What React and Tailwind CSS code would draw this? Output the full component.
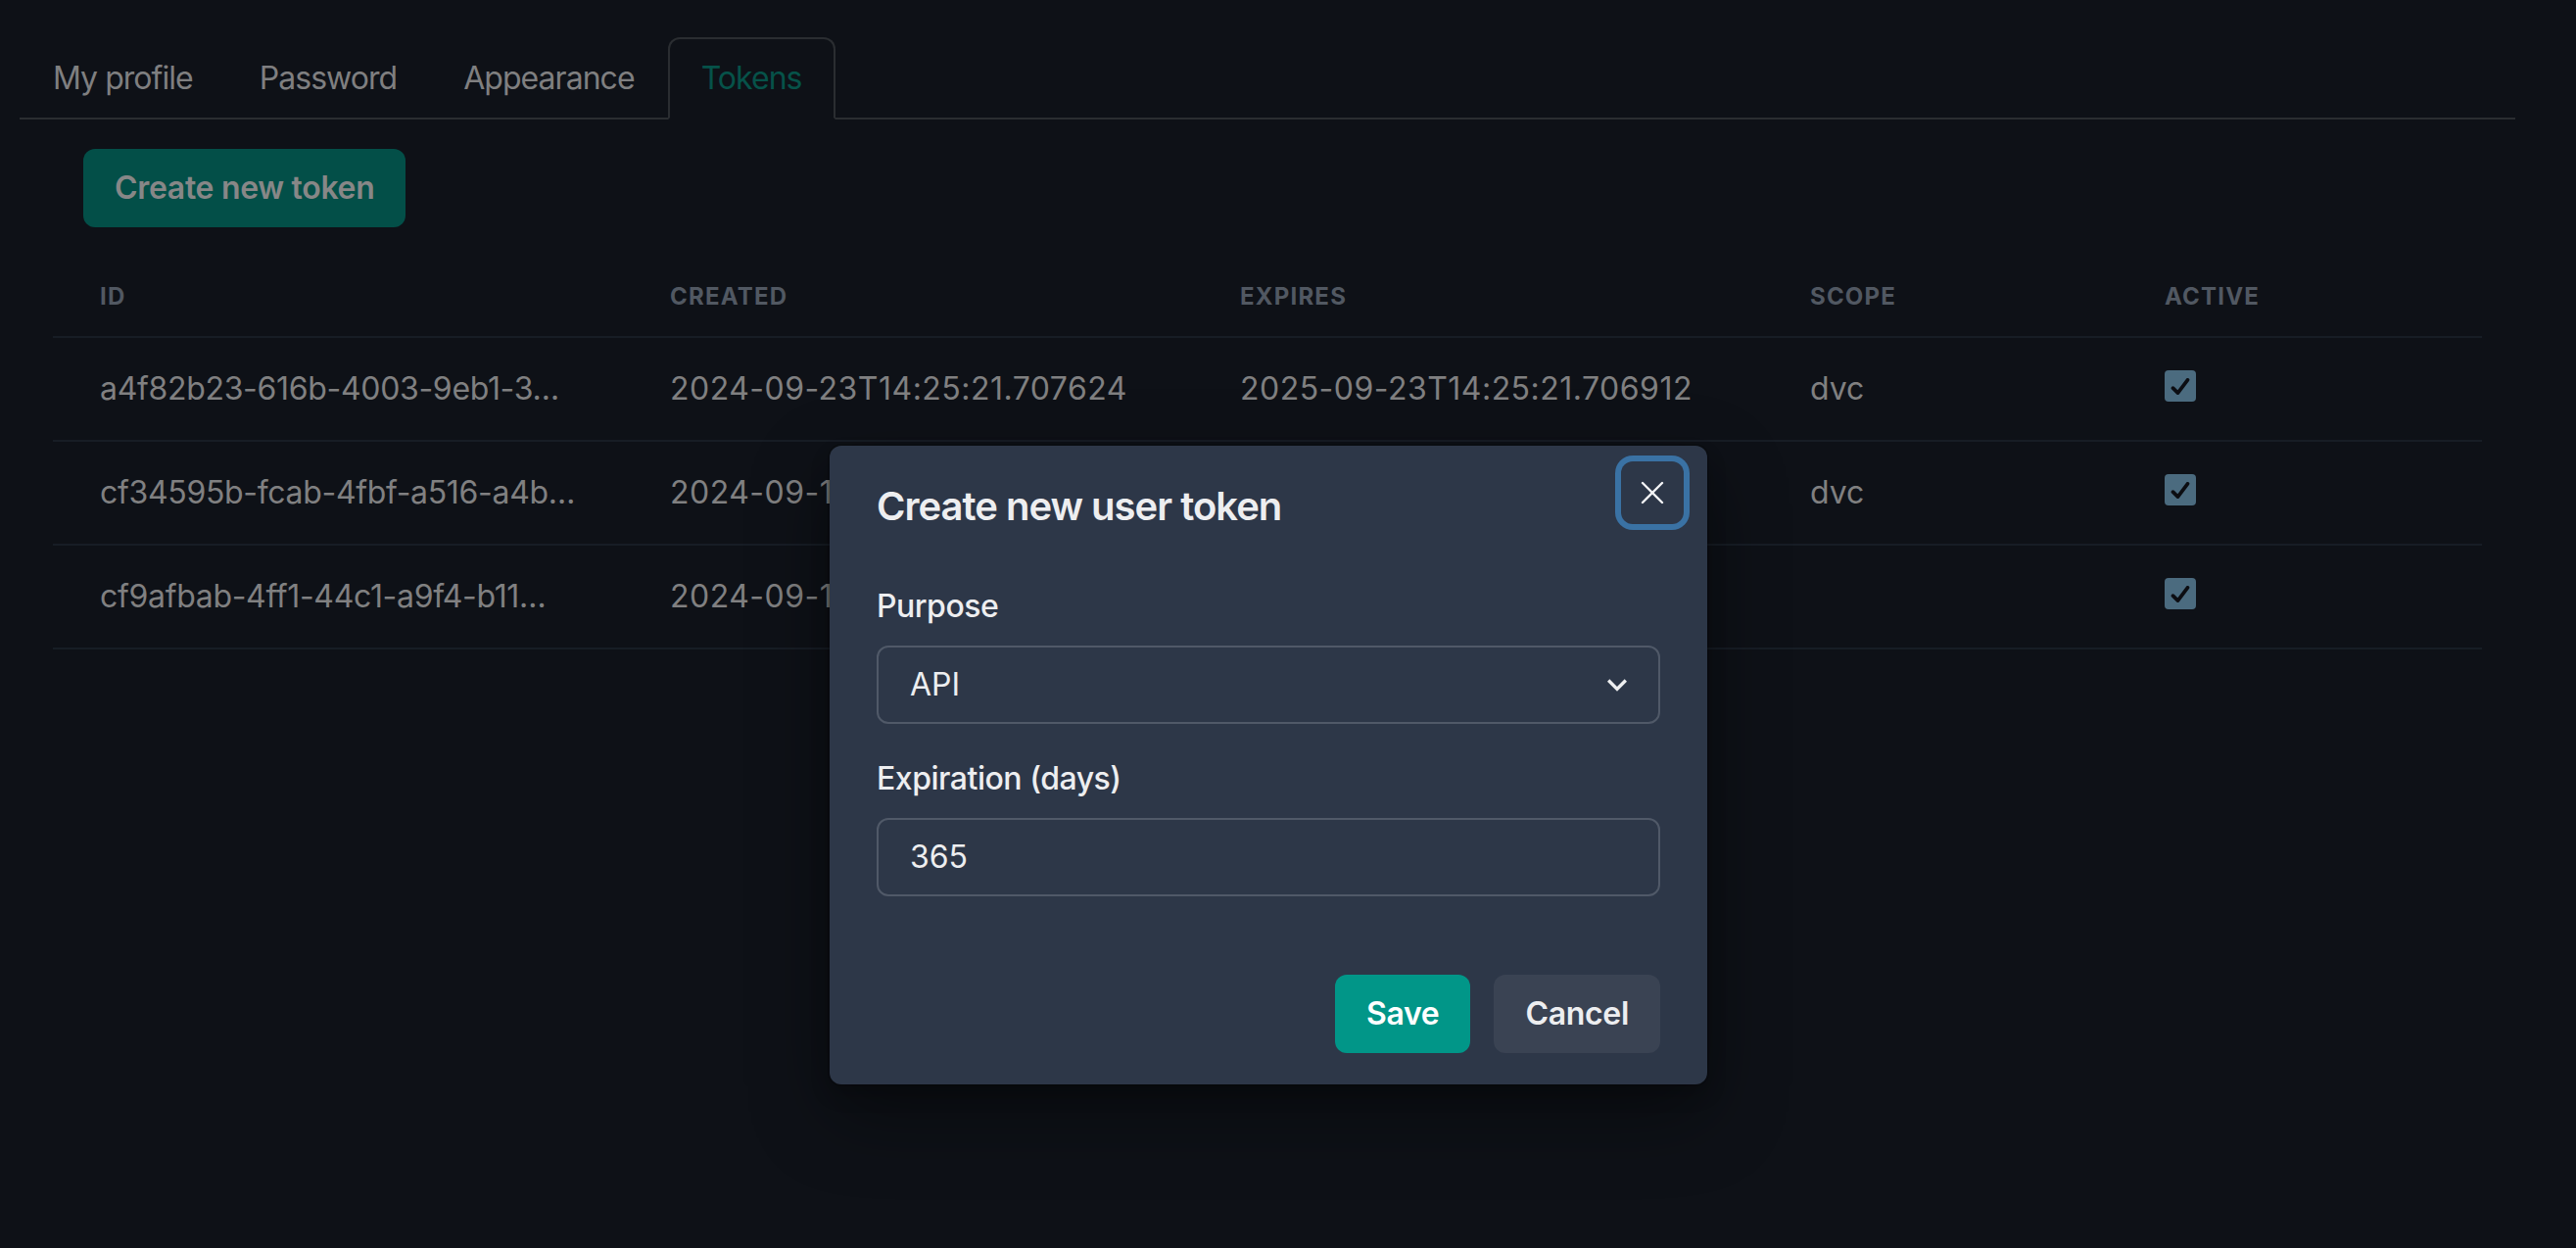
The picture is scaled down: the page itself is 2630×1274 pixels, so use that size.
import { useState } from 'react';

const tabs = ['My profile', 'Password', 'Appearance', 'Tokens'];

const tokens = [
  {
    id: 'a4f82b23-616b-4003-9eb1-3…',
    created: '2024-09-23T14:25:21.707624',
    expires: '2025-09-23T14:25:21.706912',
    scope: 'dvc',
  },
  {
    id: 'cf34595b-fcab-4fbf-a516-a4b…',
    created: '2024-09-18T10:02:47.118305',
    expires: '2025-09-18T10:02:47.117821',
    scope: 'dvc',
  },
  {
    id: 'cf9afbab-4ff1-44c1-a9f4-b11…',
    created: '2024-09-16T08:41:13.540277',
    expires: '2025-09-16T08:41:13.539604',
    scope: '',
  },
];

const cols = 'grid grid-cols-[582px_582px_582px_362px_372px]';

function CheckBox() {
  return (
    <div className="w-[32px] h-[32px] rounded-[4px] bg-[#4b6b7f] flex items-center justify-center">
      <svg viewBox="0 0 12 10" className="w-[20px] h-[17px]" fill="none">
        <polyline
          points="1.5 6 4.5 9 10.5 1"
          stroke="#0c0d12"
          strokeWidth="2.2"
          strokeLinecap="round"
          strokeLinejoin="round"
        />
      </svg>
    </div>
  );
}

export default function App() {
  const [active] = useState('Tokens');

  return (
    <div className="relative w-full h-[1274px] overflow-hidden bg-[#0e1117] font-['Inter','Noto_Sans',sans-serif]">
      <div className="pt-[38px] pl-[20px] w-[2568px]">
        {/* Tabs */}
        <div className="flex border-b-2 border-[#2a2d31]">
          {tabs.map((t) => (
            <div
              key={t}
              className={`px-[32px] py-[16px] text-[32px] leading-[48px] tracking-[-0.03em] border-2 rounded-t-[12px] mb-[-2px]
                ${t === active
                  ? 'border-[#2a2d31] border-b-[#0e1117] text-[#065249]'
                  : 'border-transparent text-[#7f7f80]'}`}
            >
              {t}
            </div>
          ))}
        </div>

        {/* Panel */}
        <div className="pl-[34px] pt-[30px]">
          <button className="ml-[31px] h-[80px] px-[32px] rounded-[12px] bg-[#034f48] text-[#878787] text-[32px] font-semibold tracking-[-0.01em]">
            Create new token
          </button>

          <div className="mt-[31px] w-[2480px]">
            <div className={`${cols} border-b-2 border-[#171d25]`}>
              {['ID', 'Created', 'Expires', 'Scope', 'Active'].map((h) => (
                <div
                  key={h}
                  className="px-[48px] py-[24px] text-[24px] leading-[32px] font-bold uppercase tracking-wider text-[#515862]"
                >
                  {h}
                </div>
              ))}
            </div>
            {tokens.map((tk) => (
              <div key={tk.id} className={`${cols} border-b-2 border-[#171d25] text-[32px] leading-[40px] text-[#808081]`}>
                <div className="px-[48px] py-[32px] whitespace-nowrap tracking-[-0.01em]">{tk.id}</div>
                <div className="px-[48px] py-[32px] whitespace-nowrap tracking-[0.015em]">{tk.created}</div>
                <div className="px-[48px] py-[32px] whitespace-nowrap tracking-[0.015em]">{tk.expires}</div>
                <div className="px-[48px] py-[32px]">{tk.scope}</div>
                <div className="px-[48px] py-[32px]">
                  <div className="h-[40px] pt-[1px]">
                    <CheckBox />
                  </div>
                </div>
              </div>
            ))}
          </div>
        </div>
      </div>

      {/* Modal */}
      <div className="absolute left-[847px] top-[455px] w-[896px] rounded-[12px] bg-[#2d3748] text-[#edeef0] shadow-[0_0_0_2px_rgba(0,0,0,0.1),0_10px_20px_rgba(0,0,0,0.2),0_30px_80px_rgba(0,0,0,0.4)]">
        <div className="px-[48px] py-[32px] text-[40px] leading-[60px] font-semibold tracking-[-0.025em]">
          Create new user token
        </div>
        <button className="absolute top-[16px] right-[24px] w-[64px] h-[64px] rounded-[12px] flex items-center justify-center shadow-[0_0_0_6px_#3a72a4]">
          <svg viewBox="0 0 24 24" className="w-[24px] h-[24px]" fill="none">
            <path d="M2 2L22 22M22 2L2 22" stroke="#f2f3f5" strokeWidth="2.4" strokeLinecap="round" />
          </svg>
        </button>

        <div className="px-[48px] pt-[16px] pb-[48px]">
          <div className="text-[32px] leading-[48px] font-medium mb-[16px] tracking-[-0.015em]">Purpose</div>
          <div className="relative h-[80px] border-2 border-[#505968] rounded-[12px] pl-[32px] pr-[64px] flex items-center text-[32px]">
            API
            <svg viewBox="0 0 24 24" className="absolute right-[22px] top-1/2 -translate-y-1/2 w-[40px] h-[40px]" fill="currentColor">
              <path d="M16.59 8.59L12 13.17 7.41 8.59 6 10l6 6 6-6z" />
            </svg>
          </div>

          <div className="mt-[32px] text-[32px] leading-[48px] font-medium mb-[16px] tracking-[-0.015em]">Expiration (days)</div>
          <div className="h-[80px] border-2 border-[#505968] rounded-[12px] px-[32px] flex items-center text-[32px]">
            365
          </div>
        </div>

        <div className="px-[48px] py-[32px] flex justify-end gap-[24px]">
          <button className="h-[80px] px-[32px] rounded-[12px] bg-[#019688] text-white text-[32px] font-semibold tracking-[-0.01em]">
            Save
          </button>
          <button className="h-[80px] px-[32px] rounded-[12px] bg-[#3a4353] text-[#edeef0] text-[32px] font-semibold tracking-[-0.01em]">
            Cancel
          </button>
        </div>
      </div>
    </div>
  );
}
